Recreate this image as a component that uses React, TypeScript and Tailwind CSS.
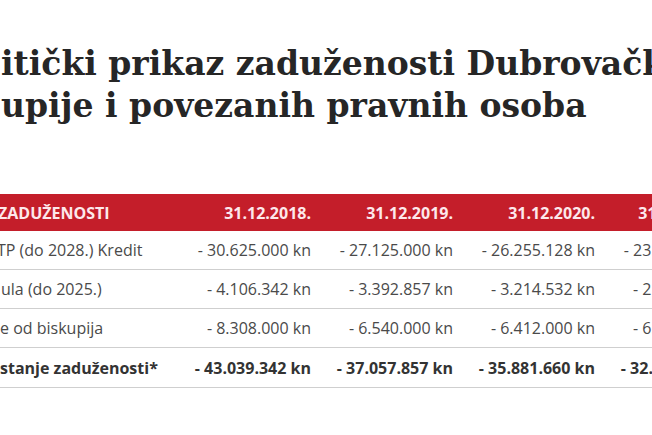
import React from "react";

const rows = [
  { label: "TP (do 2028.) Kredit", shift: "-ml-[3px]", vals: ["- 30.625.000 kn", "- 27.125.000 kn", "- 26.255.128 kn", "- 23.750.000 kn"] },
  { label: "ula (do 2025.)", shift: "ml-[1px]", vals: ["- 4.106.342 kn", "- 3.392.857 kn", "- 3.214.532 kn", "- 2.678.571 kn"] },
  { label: "e od biskupija", shift: "ml-0", vals: ["- 8.308.000 kn", "- 6.540.000 kn", "- 6.412.000 kn", "- 6.284.000 kn"] },
];

export default function App() {
  return (
    <div className="w-[652px] h-[435px] overflow-hidden bg-white">
      <h1
        className="pt-[43px] pl-[1px] text-[33px] leading-[42px] font-bold text-[#262626] whitespace-nowrap"
        style={{ fontFamily: '"DejaVu Serif", serif' }}
      >
        <div>itički prikaz zaduženosti Dubrovačke</div>
        <div>upije i povezanih pravnih osoba</div>
      </h1>
      <div
        className="mt-[67px] w-[737px] text-[16px] text-[#4a4a4a]"
        style={{ fontFamily: '"Open Sans", sans-serif' }}
      >
        <div className="grid grid-cols-[169px_142px_142px_142px_142px] h-[37px] items-center bg-[#c41e2a] text-[#fde8eb] font-bold text-[16px] whitespace-nowrap">
          <div className="-ml-[2px]">ZADUŽENOSTI</div>
          <div className="text-right">31.12.2018.</div>
          <div className="text-right">31.12.2019.</div>
          <div className="text-right">31.12.2020.</div>
          <div className="text-right pr-[12px]">31.12.2021.</div>
        </div>
        {rows.map((r) => (
          <div
            key={r.label}
            className="grid grid-cols-[169px_142px_142px_142px_142px] h-[39px] items-center border-b border-[#cfcfcf] whitespace-nowrap"
          >
            <div className={r.shift}>{r.label}</div>
            {r.vals.map((v) => (
              <div key={v} className="text-right">{v}</div>
            ))}
          </div>
        ))}
        <div className="grid grid-cols-[169px_142px_142px_142px_142px] h-[40px] items-center border-b border-[#cfcfcf] whitespace-nowrap font-bold text-[#333]">
          <div>stanje zaduženosti*</div>
          <div className="text-right">- 43.039.342 kn</div>
          <div className="text-right">- 37.057.857 kn</div>
          <div className="text-right">- 35.881.660 kn</div>
          <div className="text-right">- 32.039.571 kn</div>
        </div>
      </div>
    </div>
  );
}
